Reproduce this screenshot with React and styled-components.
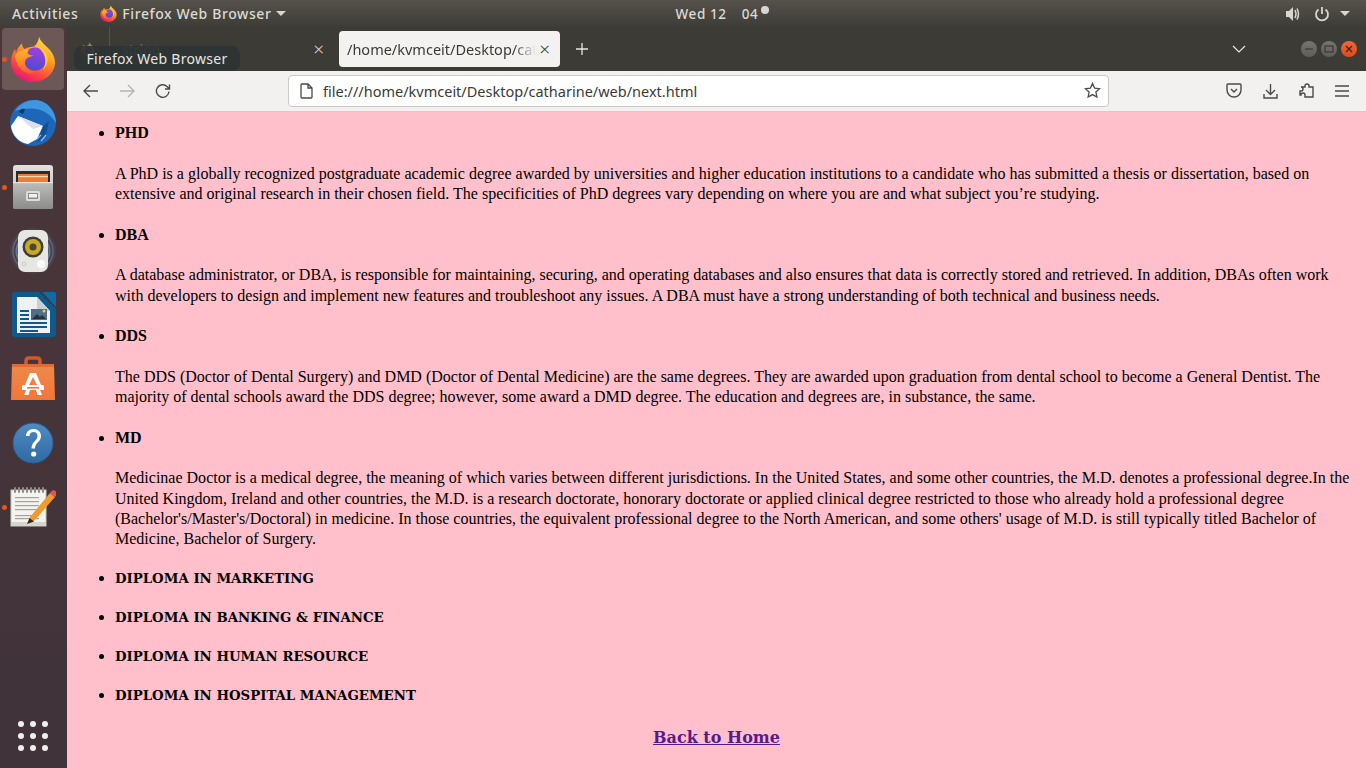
import React from 'react';
import styled, { createGlobalStyle } from 'styled-components';

const GlobalStyle = createGlobalStyle`
  *, *::before, *::after {
    box-sizing: border-box;
  }

  html, body {
    margin: 0;
    padding: 0;
    height: 100%;
    overflow: hidden;
  }
`;

const DEGREES = [
  {
    title: 'PHD',
    text: 'A PhD is a globally recognized postgraduate academic degree awarded by universities and higher education institutions to a candidate who has submitted a thesis or dissertation, based on extensive and original research in their chosen field. The specificities of PhD degrees vary depending on where you are and what subject you’re studying.',
  },
  {
    title: 'DBA',
    text: 'A database administrator, or DBA, is responsible for maintaining, securing, and operating databases and also ensures that data is correctly stored and retrieved. In addition, DBAs often work with developers to design and implement new features and troubleshoot any issues. A DBA must have a strong understanding of both technical and business needs.',
  },
  {
    title: 'DDS',
    text: 'The DDS (Doctor of Dental Surgery) and DMD (Doctor of Dental Medicine) are the same degrees. They are awarded upon graduation from dental school to become a General Dentist. The majority of dental schools award the DDS degree; however, some award a DMD degree. The education and degrees are, in substance, the same.',
  },
  {
    title: 'MD',
    text: "Medicinae Doctor is a medical degree, the meaning of which varies between different jurisdictions. In the United States, and some other countries, the M.D. denotes a professional degree.In the United Kingdom, Ireland and other countries, the M.D. is a research doctorate, honorary doctorate or applied clinical degree restricted to those who already hold a professional degree (Bachelor's/Master's/Doctoral) in medicine. In those countries, the equivalent professional degree to the North American, and some others' usage of M.D. is still typically titled Bachelor of Medicine, Bachelor of Surgery.",
  },
];

const DIPLOMAS = [
  'DIPLOMA IN MARKETING',
  'DIPLOMA IN BANKING & FINANCE',
  'DIPLOMA IN HUMAN RESOURCE',
  'DIPLOMA IN HOSPITAL MANAGEMENT',
];

const FirefoxIcon = ({ size = 46, id = 'ff' }) => (
  <svg width={size} height={size} viewBox="0 0 46 46">
    <defs>
      <linearGradient id={`${id}Body`} x1="0.8" y1="0.05" x2="0.3" y2="1">
        <stop offset="0" stopColor="#ffe24a" />
        <stop offset="0.35" stopColor="#ffa11e" />
        <stop offset="0.72" stopColor="#ff4a3a" />
        <stop offset="1" stopColor="#e5127f" />
      </linearGradient>
      <linearGradient id={`${id}Globe`} x1="0.6" y1="0" x2="0.4" y2="1">
        <stop offset="0" stopColor="#a23fe0" />
        <stop offset="1" stopColor="#4b4ccf" />
      </linearGradient>
      <linearGradient id={`${id}Fox`} x1="0.3" y1="0" x2="0.5" y2="1">
        <stop offset="0" stopColor="#ffb52a" />
        <stop offset="1" stopColor="#ff5a2e" />
      </linearGradient>
    </defs>
    <path
      d="M29 .5C30 5 34 8 38 12c5 5 7 10 7 14.500C45 37 35 46 23 46 11 46 1 37 1 26c0-5 1.500-9 4-13l1 4c1-4 3.500-7.500 6-9.500 0 2.500 1 4.500 2.500 5.500 3-1.500 6.500-2.500 10-2.500C26.500 8 29 4.500 29 .5z"
      fill={`url(#${id}Body)`}
    />
    <circle cx="25" cy="23" r="11.500" fill={`url(#${id}Globe)`} />
    <path
      d="M5 20c3-5 9-7 14-6-3 3-1 5.500 5 5.500-4 1.500-8 2-9 6-1 6 5 10.500 13 9.500-8 6-21 1-23-15z"
      fill={`url(#${id}Fox)`}
    />
    <path d="M24 9c6 0 11 4 13 10 1.500 5 0 11-4 15 5-9 2-20-9-25z" fill="#ffc92e" />
  </svg>
);

const ThunderbirdIcon = () => (
  <svg width="48" height="48" viewBox="0 0 48 48">
    <circle cx="24" cy="24" r="23" fill="#1d67b8" />
    <path d="M6 12C11 4 22-1 32 2c9 3 15 12 15 22-5-8-12-13-20-14-8-1-15 0-21 2z" fill="#3f97e2" />
    <path d="M10 13c1-3 4-4 6-3l-2 5z" fill="#0c3568" />
    <path d="M2 27l7-10 25 10-6 13-9 5C10 44 3 36 2 27z" fill="#fff" />
    <path d="M9 17l25 10-10 3z" fill="#d9e0e8" />
    <path d="M34 27l6-5-3 14-9 8z" fill="#134f98" />
    <path d="M28 40l4-4M32 42l5-6" stroke="#8fc0ec" strokeWidth="1.200" />
  </svg>
);

const FilesIcon = () => (
  <svg width="48" height="48" viewBox="0 0 48 48">
    <defs>
      <linearGradient id="cabTop" x1="0" y1="0" x2="0" y2="1">
        <stop offset="0" stopColor="#e0e0de" />
        <stop offset="1" stopColor="#b6b6b4" />
      </linearGradient>
      <linearGradient id="cabFront" x1="0" y1="0" x2="0" y2="1">
        <stop offset="0" stopColor="#bdbdbb" />
        <stop offset="1" stopColor="#8c8c8a" />
      </linearGradient>
    </defs>
    <rect x="4" y="2" width="40" height="44" rx="3" fill="url(#cabTop)" />
    <rect x="7" y="8" width="34" height="13" fill="#2f2b28" />
    <rect x="9" y="11" width="30" height="9" fill="#ef7b35" />
    <rect x="9" y="13" width="30" height="1.200" fill="#ffdcae" />
    <rect x="4" y="19" width="40" height="27" rx="2" fill="url(#cabFront)" />
    <rect x="4" y="19" width="40" height="1.200" fill="#e6e6e4" />
    <rect x="17" y="28" width="14" height="10" rx="1.500" fill="#dcdcda" />
    <rect x="19" y="30" width="10" height="6" fill="#8b8b89" />
    <rect x="20" y="31" width="8" height="3.500" fill="#f2f2f0" />
  </svg>
);

const SpeakerIcon = () => (
  <svg width="48" height="48" viewBox="0 0 48 48">
    <circle cx="24" cy="24" r="23" fill="#55505e" opacity="0.4" />
    <circle cx="24" cy="24" r="20" fill="none" stroke="#5f7695" strokeWidth="1.500" opacity="0.7" />
    <circle cx="24" cy="24" r="16.500" fill="none" stroke="#6f87a8" strokeWidth="2" opacity="0.8" />
    <rect x="9" y="3" width="30" height="42" rx="7" fill="#e6e6e2" />
    <circle cx="24" cy="20" r="10.500" fill="#3f3d38" />
    <circle cx="24" cy="20" r="8" fill="#c6a926" />
    <circle cx="24" cy="20" r="3.500" fill="#4d4630" />
    <circle cx="32" cy="37" r="4" fill="#fbfbfa" />
    <circle cx="15" cy="37" r="2" fill="none" stroke="#c9c9c6" />
  </svg>
);

const WriterIcon = () => (
  <svg width="48" height="48" viewBox="0 0 48 48">
    <path d="M3 4q0-3 3-3h24l17 17v25q0 3-3 3H6q-3 0-3-3z" fill="#0f5a8a" />
    <path d="M33 1h12q2 0 2 2v13z" fill="#0f6ba4" />
    <path d="M8 6h20l13 14v22H8z" fill="#eef0f1" />
    <path d="M28 6l13 14H28z" fill="#c8d0d6" />
    <rect x="11" y="19" width="9" height="2" fill="#0f5a8a" />
    <rect x="11" y="23" width="9" height="2" fill="#0f5a8a" />
    <rect x="11" y="27" width="9" height="2" fill="#0f5a8a" />
    <rect x="11" y="31" width="27" height="2" fill="#0f5a8a" />
    <rect x="11" y="35" width="27" height="2" fill="#0f5a8a" />
    <rect x="11" y="39" width="18" height="2" fill="#0f5a8a" />
    <rect x="22" y="18" width="16" height="11" fill="#4d6f88" />
    <path d="M23 28l5-5 3 3 2-2 4 4z" fill="#26323a" />
    <circle cx="35" cy="20" r="1.500" fill="#f2c84a" />
  </svg>
);

const SoftwareIcon = () => (
  <svg width="48" height="48" viewBox="0 0 48 48">
    <defs>
      <linearGradient id="bag" x1="0" y1="0" x2="0" y2="1">
        <stop offset="0" stopColor="#ee8a4c" />
        <stop offset="1" stopColor="#f2763a" />
      </linearGradient>
    </defs>
    <path d="M17 14V6q0-3 3-3h8q3 0 3 3v8" fill="none" stroke="#d4582c" strokeWidth="3.500" />
    <path d="M3 9h42l1 36H2z" fill="url(#bag)" />
    <path d="M3 9h42v3H3z" fill="#dd6c38" />
    <path d="M21 18h6l5 12h-4l-4-8-4 8h-4z" fill="#fff" />
    <path d="M14 30h20l1 1v4H13v-4z" fill="#fff" />
    <path d="M17 35h4l-1.500 5h-4.500zM27 35h4l2 5h-4.500z" fill="#fff" />
    <rect x="18" y="32" width="12" height="1.600" fill="#f2763a" />
  </svg>
);

const HelpIcon = () => (
  <svg width="44" height="44" viewBox="0 0 44 44">
    <defs>
      <linearGradient id="helpBg" x1="0" y1="0" x2="0" y2="1">
        <stop offset="0" stopColor="#4f8cc2" />
        <stop offset="1" stopColor="#2f6aa2" />
      </linearGradient>
    </defs>
    <circle cx="22" cy="22" r="20" fill="url(#helpBg)" stroke="#2a5f92" />
    <path
      d="M15 15c0-4 3-7 7.500-7s7.500 3 7.500 7c0 6-6 6.500-6 12.500h-3.500c0-7 6-7.500 6-12.500 0-2.500-1.500-4-4-4s-4 1.500-4 4z"
      fill="#fff"
    />
    <circle cx="22.700" cy="33" r="2.600" fill="#fff" />
  </svg>
);

const NotesIcon = () => (
  <svg width="46" height="40" viewBox="0 0 46 40">
    <rect x="1" y="3" width="35" height="36" fill="#f4f3ee" stroke="#c9c8c2" />
    <rect x="1" y="35" width="35" height="4" fill="#d5d4ce" />
    {[5, 9, 13, 17, 21, 25, 29, 33].map((x) => (
      <rect key={x} x={x - 1} y="0" width="2" height="6" rx="1" fill="#8c8c88" />
    ))}
    {[10, 14, 18, 22, 28, 31].map((y) => (
      <rect key={y} x="5" y={y} width="24" height="1.200" fill="#a2a29e" />
    ))}
    <path d="M20 30L40 6l5 4-21 24-6 2z" fill="#f09a2e" />
    <path d="M40 6l1.500-2q2-1.500 4 0t.5 4.500L45 10z" fill="#e0555a" />
    <path d="M17 37l2.500-6 4.500 3.500z" fill="#2e2a26" />
  </svg>
);

const DOCK_ITEMS = [
  { id: 'firefox', Icon: FirefoxIcon, active: true, running: true },
  { id: 'thunderbird', Icon: ThunderbirdIcon },
  { id: 'files', Icon: FilesIcon, running: true },
  { id: 'speaker', Icon: SpeakerIcon },
  { id: 'writer', Icon: WriterIcon },
  { id: 'software', Icon: SoftwareIcon },
  { id: 'help', Icon: HelpIcon },
  { id: 'notes', Icon: NotesIcon, running: true },
];

const App = () => (
  <Screen>
    <GlobalStyle />
    <TopBar>
      <TopLeft>
        <TopLabel>Activities</TopLabel>
        <AppMenu>
          <FirefoxIcon size={17} id="ffMenu" />
          <TopLabel>Firefox Web Browser</TopLabel>
          <Caret />
        </AppMenu>
      </TopLeft>
      <Clock>
        Wed 12 <ClockTime>04</ClockTime>
        <ClockDot />
      </Clock>
      <TopRight>
        <svg width="16" height="16" viewBox="0 0 16 16" fill="#d8d6d0">
          <path d="M1 5h3l4-4v14l-4-4H1z" />
          <path d="M10 4q2 4 0 8M12 2.500q3 5.500 0 11" fill="none" stroke="#d8d6d0" strokeWidth="1.500" />
        </svg>
        <svg width="16" height="16" viewBox="0 0 16 16" fill="none" stroke="#d8d6d0" strokeWidth="1.800">
          <path d="M4.500 3.500a6 6 0 1 0 7 0M8 1v7" />
        </svg>
        <Caret />
      </TopRight>
    </TopBar>
    <Desktop>
      <Dock>
        <DockList>
          {DOCK_ITEMS.map(({ id, Icon, active, running }) => (
            <DockItem key={id} $active={active}>
              {running && <RunDot />}
              <Icon />
            </DockItem>
          ))}
        </DockList>
        <AppGrid>
          {Array.from({ length: 9 }, (_, i) => (
            <AppDot key={i} />
          ))}
        </AppGrid>
      </Dock>
      <Browser>
        <TabStrip>
          <InactiveTab>
            <FaviconDim>
              <FirefoxIcon size={15} id="ffTab" />
            </FaviconDim>
            <TabDivider />
            <TabTitleDim>string</TabTitleDim>
            <TabClose $light>×</TabClose>
          </InactiveTab>
          <ActiveTab>
            <TabTitle>/home/kvmceit/Desktop/catharine</TabTitle>
            <TabClose>×</TabClose>
          </ActiveTab>
          <NewTab>
            <svg width="12" height="12" viewBox="0 0 12 12" stroke="#e8e6e1" strokeWidth="1.300">
              <path d="M6 0v12M0 6h12" />
            </svg>
          </NewTab>
          <TabSpacer />
          <ListTabs>
            <svg width="14" height="8" viewBox="0 0 14 8" fill="none" stroke="#e8e6e1" strokeWidth="1.200">
              <path d="M1 1l6 6 6-6" />
            </svg>
          </ListTabs>
          <WindowButtons>
            <WindowButton>
              <svg width="10" height="10" viewBox="0 0 10 10" stroke="#3b3a36" strokeWidth="1.200">
                <path d="M1 5h8" />
              </svg>
            </WindowButton>
            <WindowButton>
              <svg width="10" height="10" viewBox="0 0 10 10" fill="none" stroke="#3b3a36" strokeWidth="1.200">
                <rect x="1" y="2" width="8" height="6" />
              </svg>
            </WindowButton>
            <WindowButton $close>
              <svg width="10" height="10" viewBox="0 0 10 10" stroke="#4a2110" strokeWidth="1.300">
                <path d="M2 2l6 6M8 2l-6 6" />
              </svg>
            </WindowButton>
          </WindowButtons>
        </TabStrip>
        <Tooltip>Firefox Web Browser</Tooltip>
        <Toolbar>
          <NavGroup>
            <svg width="16" height="14" viewBox="0 0 16 14" fill="none" stroke="#4a4a48" strokeWidth="1.400">
              <path d="M15 7H1.500M7 1L1 7l6 6" />
            </svg>
            <svg width="16" height="14" viewBox="0 0 16 14" fill="none" stroke="#b5b4b1" strokeWidth="1.400">
              <path d="M1 7h13.500M9 1l6 6-6 6" />
            </svg>
            <svg width="16" height="16" viewBox="0 0 16 16" fill="none" stroke="#4a4a48" strokeWidth="1.400">
              <path d="M14 8.500A6.300 6.300 0 1 1 12 3.400L14.500 6M14.500 1.500V6H10" />
            </svg>
          </NavGroup>
          <UrlBox>
            <svg width="13" height="16" viewBox="0 0 13 16" fill="none" stroke="#4a4a48" strokeWidth="1.300">
              <path d="M2 1h6l4 4v9q0 1-1 1H2q-1 0-1-1V2q0-1 1-1zM8 1v4h4" />
            </svg>
            <UrlText>file:///home/kvmceit/Desktop/catharine/web/next.html</UrlText>
            <svg width="17" height="17" viewBox="0 0 17 17" fill="none" stroke="#4a4a48" strokeWidth="1.300">
              <path d="M8.500 1.500l2.100 4.600 5 .6-3.700 3.400 1 5-4.400-2.500-4.400 2.500 1-5L1.400 6.700l5-.6z" />
            </svg>
          </UrlBox>
          <ToolIcons>
            <svg width="16" height="15" viewBox="0 0 16 15" fill="none" stroke="#4a4a48" strokeWidth="1.400">
              <path d="M2 1h12q1 0 1 1v5a7 7 0 0 1-14 0V2q0-1 1-1zM5 6l3 3 3-3" />
            </svg>
            <svg width="15" height="16" viewBox="0 0 15 16" fill="none" stroke="#4a4a48" strokeWidth="1.400">
              <path d="M7.500 1v10M3 7l4.500 4.500L12 7M1 11v4h13v-4" />
            </svg>
            <svg width="15" height="16" viewBox="0 0 15 16" fill="none" stroke="#4a4a48" strokeWidth="1.400">
              <path d="M6 3a2 2 0 0 1 4 0v1h4v10H6v-2a2 2 0 0 0-4 0H1V8h1a2 2 0 0 0 0-4h4z" />
            </svg>
            <svg width="14" height="12" viewBox="0 0 14 12" stroke="#4a4a48" strokeWidth="1.400">
              <path d="M0 1h14M0 6h14M0 11h14" />
            </svg>
          </ToolIcons>
        </Toolbar>
        <PageBody>
          <List>
            {DEGREES.map(({ title, text }) => (
              <Item key={title}>
                <Title>{title}</Title>
                <Description>{text}</Description>
              </Item>
            ))}
            {DIPLOMAS.map((title) => (
              <Item key={title}>
                <DiplomaTitle>{title}</DiplomaTitle>
              </Item>
            ))}
          </List>
          <BackLink href="#home">Back to Home</BackLink>
        </PageBody>
      </Browser>
    </Desktop>
  </Screen>
);

export default App;

// STYLES
const Screen = styled.div`
  display: flex;
  flex-direction: column;
  height: 768px;
  overflow: hidden;
  width: 1366px;
`;

const TopBar = styled.div`
  align-items: center;
  background: linear-gradient(#55524b, #3e3c37);
  color: #dcdad4;
  display: grid;
  flex: 0 0 27px;
  font-family: 'Noto Sans', sans-serif;
  font-size: 14px;
  font-weight: 500;
  grid-template-columns: 1fr auto 1fr;
  letter-spacing: 0.6px;
  padding: 0 12px;
`;

const TopLeft = styled.div`
  align-items: center;
  display: flex;
  gap: 22px;
`;

const TopLabel = styled.span`
  white-space: nowrap;
`;

const AppMenu = styled.div`
  align-items: center;
  display: flex;
  gap: 5px;
`;

const Caret = styled.span`
  border-left: 5px solid transparent;
  border-right: 5px solid transparent;
  border-top: 5px solid #d8d6d0;
  display: inline-block;
  height: 0;
  width: 0;
`;

const Clock = styled.div`
  font-size: 13.5px;
  margin-left: 68px;
  position: relative;
`;

const ClockTime = styled.span`
  margin-left: 11px;
`;

const ClockDot = styled.span`
  background: #d8d6d0;
  border-radius: 50%;
  height: 8px;
  position: absolute;
  right: -11px;
  top: 1px;
  width: 8px;
`;

const TopRight = styled.div`
  align-items: center;
  display: flex;
  gap: 13px;
  justify-content: flex-end;
  padding-right: 4px;

  ${Caret} {
    margin-left: -3px;
  }
`;

const Desktop = styled.div`
  display: flex;
  flex: 1;
  min-height: 0;
`;

const Dock = styled.div`
  background: linear-gradient(#4b363a, #40333a);
  display: flex;
  flex: 0 0 67px;
  flex-direction: column;
  justify-content: space-between;
  padding: 1px 0 17px;
`;

const DockList = styled.div`
  display: flex;
  flex-direction: column;
  gap: 2px;
  padding: 0 3px 0 2px;
`;

const DockItem = styled.div`
  align-items: center;
  background: ${({ $active }) => ($active ? '#6d5858' : 'transparent')};
  border-radius: 4px;
  display: flex;
  height: 62px;
  justify-content: center;
  position: relative;
`;

const RunDot = styled.span`
  background: #e95420;
  border-radius: 50%;
  height: 5px;
  left: 0;
  position: absolute;
  top: 29px;
  width: 5px;
`;

const AppGrid = styled.div`
  display: grid;
  gap: 6px;
  grid-template-columns: repeat(3, 6px);
  justify-content: center;
  padding-right: 1px;
`;

const AppDot = styled.span`
  background: #f1f0ee;
  border-radius: 50%;
  height: 6px;
  width: 6px;
`;

const Browser = styled.div`
  display: flex;
  flex: 1;
  flex-direction: column;
  min-width: 0;
  position: relative;
`;

const TabStrip = styled.div`
  align-items: center;
  background: #3d3b36;
  display: flex;
  flex: 0 0 44px;
  font-family: 'Noto Sans', sans-serif;
`;

const InactiveTab = styled.div`
  align-items: center;
  display: flex;
  flex: 0 0 268px;
  height: 44px;
  margin-right: 4px;
  padding: 0 11px 0 13px;
`;

const FaviconDim = styled.span`
  display: flex;
  opacity: 0.55;
`;

const TabDivider = styled.span`
  background: #55534d;
  height: 44px;
  margin: 0 12px 0 14px;
  width: 1px;
`;

const TabTitleDim = styled.span`
  color: #77756f;
  flex: 1;
  font-size: 14px;
`;

const ActiveTab = styled.div`
  align-items: center;
  background: #f3f2f0;
  border-radius: 4px;
  display: flex;
  flex: 0 0 221px;
  height: 36px;
  min-width: 0;
  padding: 0 10px 0 8px;
`;

const TabTitle = styled.span`
  -webkit-mask-image: linear-gradient(to right, #000 88%, transparent 100%);
  color: #3b3a37;
  flex: 1;
  font-size: 14.5px;
  mask-image: linear-gradient(to right, #000 88%, transparent 100%);
  min-width: 0;
  overflow: hidden;
  white-space: nowrap;
`;

const TabClose = styled.span`
  color: ${({ $light }) => ($light ? '#d8d6d0' : '#3b3a37')};
  font-size: 19px;
  font-weight: 300;
  line-height: 1;
  margin-left: 3px;
`;

const NewTab = styled.span`
  display: flex;
  margin-left: 16px;
`;

const TabSpacer = styled.div`
  flex: 1;
`;

const ListTabs = styled.span`
  display: flex;
  margin-right: 55px;
`;

const WindowButtons = styled.div`
  display: flex;
  gap: 4px;
  margin-right: 9px;
`;

const WindowButton = styled.span`
  align-items: center;
  background: ${({ $close }) => ($close ? 'linear-gradient(#f0673a, #dc4c1c)' : 'linear-gradient(#77756f, #5f5d58)')};
  border-radius: 50%;
  display: flex;
  height: 16px;
  justify-content: center;
  width: 16px;
`;

const Tooltip = styled.div`
  align-items: center;
  background: rgba(44, 50, 52, 0.88);
  border-radius: 8px;
  color: #e8e6e1;
  display: flex;
  font-family: 'Noto Sans', sans-serif;
  font-size: 14px;
  height: 25px;
  justify-content: center;
  left: 7px;
  letter-spacing: 0.3px;
  position: absolute;
  top: 19px;
  width: 166px;
`;

const Toolbar = styled.div`
  align-items: center;
  background: #f2f1ef;
  border-bottom: 1px solid #cfcecb;
  display: flex;
  flex: 0 0 41px;
  padding-bottom: 1px;
`;

const NavGroup = styled.div`
  align-items: center;
  display: flex;
  gap: 20px;
  padding-left: 16px;
`;

const UrlBox = styled.div`
  align-items: center;
  background: #fff;
  border: 1px solid #cbcac7;
  border-radius: 4px;
  display: flex;
  height: 32px;
  margin-left: 117px;
  padding: 0 7px 0 11px;
  width: 821px;
`;

const UrlText = styled.span`
  color: #3b3a37;
  flex: 1;
  font-family: 'Noto Sans', sans-serif;
  font-size: 14.5px;
  margin-left: 10px;
`;

const ToolIcons = styled.div`
  align-items: center;
  display: flex;
  gap: 21px;
  margin-left: 117px;
`;

const PageBody = styled.div`
  background: #ffc0cb;
  color: #000;
  flex: 1;
  font-family: 'Liberation Serif', 'Times New Roman', serif;
  font-size: 16px;
  letter-spacing: 0.004px;
  line-height: 20.3px;
  min-height: 0;
  overflow: hidden;
  padding: 11.2px 8px 0;
  text-align: center;
`;

const List = styled.ul`
  margin: 0;
  padding: 0 0 0 40px;
  text-align: left;
`;

const Item = styled.li`
  margin: 0;
`;

const Title = styled.strong`
  display: block;
  margin-bottom: 20.3px;
`;

const DiplomaTitle = styled.strong`
  display: block;
  font-family: 'DejaVu Serif', serif;
  font-size: 13.3px;
  margin: -1.6px 0 19.3px;
`;

const Description = styled.p`
  margin: 0 0 20.3px;
`;

const BackLink = styled.a`
  color: #551a8b;
  display: inline-block;
  font-family: 'DejaVu Serif', serif;
  font-size: 16px;
  font-weight: 700;
  margin-top: 2px;
`;
